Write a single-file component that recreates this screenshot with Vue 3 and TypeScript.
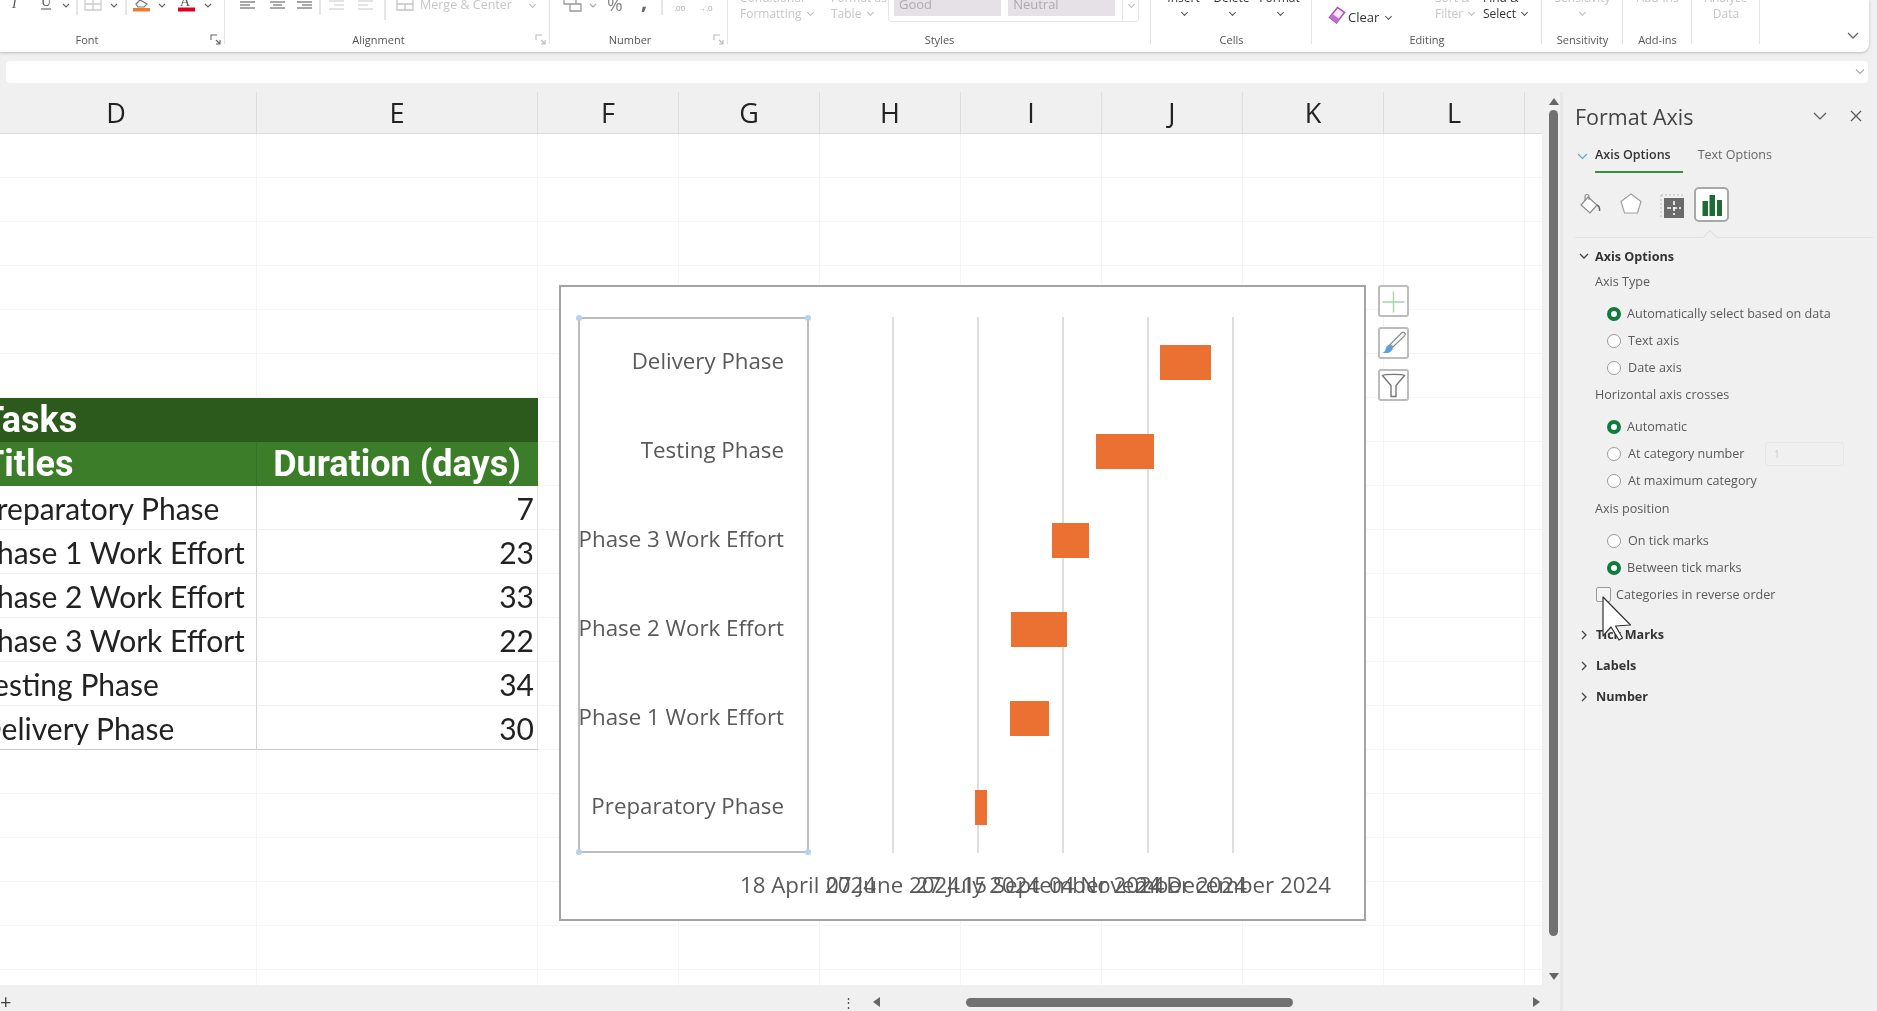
<script setup lang="ts">
import { computed } from "vue";

interface Task {
  title: string;
  offset: number;
  days: number;
}

// offset is days after the first axis date
const tasks: Task[] = [
  { title: "Preparatory Phase", offset: 98.5, days: 7 },
  { title: "Phase 1 Work Effort", offset: 119, days: 23 },
  { title: "Phase 2 Work Effort", offset: 119.5, days: 33 },
  { title: "Phase 3 Work Effort", offset: 143.5, days: 22 },
  { title: "Testing Phase", offset: 169.5, days: 34 },
  { title: "Delivery Phase", offset: 207, days: 30 },
];

const columns = ["D", "E", "F", "G", "H", "I", "J", "K", "L", ""];
const axisDates = [
  "18 April 2024",
  "07 June 2024",
  "27 July 2024",
  "15 September 2024",
  "04 November 2024",
  "24 December 2024",
];

const PX_PER_DAY = 1.7;
const AXIS_LEFT = 247; // first tick inside the chart
const ROW_STEP = 89;

const chartRows = computed(() => [...tasks].reverse());

function barStyle(task: Task, index: number) {
  return {
    left: `${AXIS_LEFT + task.offset * PX_PER_DAY}px`,
    width: `${task.days * PX_PER_DAY}px`,
    top: `${58 + index * ROW_STEP}px`,
  };
}

function labelStyle(index: number) {
  return { top: `${54 + index * ROW_STEP}px` };
}

function tickStyle(index: number) {
  return { left: `${AXIS_LEFT + index * 85}px` };
}

interface Cell {
  text: string;
  kind: string;
}

const GRID_ROWS = 20;
const TABLE_TOP = 6;

const cells = computed(() => {
  const out: Cell[] = [];
  for (let r = 0; r < GRID_ROWS; r++) {
    for (let c = 0; c < columns.length; c++) {
      let text = "";
      let kind = "";
      const t = r - TABLE_TOP;
      if (c < 2 && t >= 0 && t < 8) {
        if (t === 0) {
          kind = "cell--band";
          text = c === 0 ? "Tasks" : "";
        } else if (t === 1) {
          kind = c === 0 ? "cell--head" : "cell--head cell--center";
          text = c === 0 ? "Titles" : "Duration (days)";
        } else {
          const task = tasks[t - 2];
          kind = c === 0 ? "cell--body cell--name" : "cell--body cell--num";
          text = c === 0 ? task.title : String(task.days);
          if (t === 7) kind += " cell--last";
        }
      }
      out.push({ text, kind });
    }
  }
  return out;
});

const axisTypeOptions = [
  { label: "Automatically select based on data", on: true },
  { label: "Text axis", on: false },
  { label: "Date axis", on: false },
];
const crossesOptions = [
  { label: "Automatic", on: true, input: false },
  { label: "At category number", on: false, input: true },
  { label: "At maximum category", on: false, input: false },
];
const positionOptions = [
  { label: "On tick marks", on: false },
  { label: "Between tick marks", on: true },
];
const collapsedSections = ["Tick Marks", "Labels", "Number"];
</script>

<template>
  <div class="app">
    <!-- ribbon, the top is cut off by the window -->
    <header class="ribbon">
      <section class="group group--font">
        <div class="tools">
          <svg width="258" height="32" viewBox="-33 0 258 32">
            <text x="12" y="8" class="ico-text" font-style="italic" font-size="14">I</text>
            <text x="41" y="6" class="ico-text" font-size="14">U</text>
            <path d="M41 9h10" stroke="#888" stroke-width="1.5" />
            <path d="M63 4l3 3 3-3M111 4l3 3 3-3" fill="none" stroke="#666" stroke-width="1.2" />
            <path d="M77 0v15M126 0v15" stroke="#ddd" stroke-width="1.5" />
            <path d="M85 -3h16v13h-16zM85 4h16M93 -3v13" fill="none" stroke="#ccc" stroke-width="1.3" />
            <path d="M136 4l4-4 7 4-3 3h-6z" fill="none" stroke="#777" stroke-width="1.2" />
            <rect x="133" y="8" width="17" height="3.5" fill="#ed7d31" />
            <path d="M159 4l3 3 3-3M205 4l3 3 3-3" fill="none" stroke="#666" stroke-width="1.2" />
            <text x="180" y="6" class="ico-text" font-size="14">A</text>
            <rect x="178" y="7.5" width="17" height="4" fill="#e0001b" />
          </svg>
        </div>
        <div class="group-foot">
          <span class="group-name">Font</span>
          <svg class="launcher" width="18" height="14" viewBox="0 0 18 14">
            <path d="M4 8V3h6M9 8l4 4M13 8v4H9" fill="none" stroke="#666" stroke-width="1.1" />
          </svg>
        </div>
      </section>

      <section class="group group--align">
        <div class="tools">
          <svg width="190" height="32" viewBox="225 0 190 32">
            <path d="M240 2h15M240 5h10M240 8h15M270 2h15M273 5h9M270 8h15M297 2h15M302 5h10M297 8h15" stroke="#8c8c8c" stroke-width="1.4" />
            <path d="M320 0v15M385 0v20" stroke="#ddd" stroke-width="1.5" />
            <path d="M329 1h15M334 5h10M329 9h15M358 1h15M358 5h10M358 9h15" stroke="#c8c8c8" stroke-width="1.2" />
            <path d="M397 -1h16v11h-16zM397 4h16M405 4v6" fill="none" stroke="#c4c4c4" stroke-width="1.3" />
          </svg>
          <span class="tool-text tool-text--off merge">Merge &amp; Center</span>
          <span class="chev chev--off merge-chev"></span>
        </div>
        <div class="group-foot">
          <span class="group-name">Alignment</span>
          <svg class="launcher launcher--off" width="18" height="14" viewBox="0 0 18 14">
            <path d="M4 8V3h6M9 8l4 4M13 8v4H9" fill="none" stroke="#bbb" stroke-width="1.1" />
          </svg>
        </div>
      </section>

      <section class="group group--number">
        <div class="tools">
          <svg width="178" height="32" viewBox="550 0 178 32">
            <path d="M564 -2h12v6h-12zM570 4h11v7h-11z" fill="none" stroke="#999" stroke-width="1.3" />
            <path d="M590 4l3 3 3-3" fill="none" stroke="#aaa" stroke-width="1.2" />
            <text x="607" y="11" fill="#888" font-family="Open Sans, sans-serif" font-size="19">%</text>
            <text x="641" y="9" fill="#666" font-family="Open Sans, sans-serif" font-weight="700" font-size="22">,</text>
            <path d="M662 0v15" stroke="#ddd" stroke-width="1.5" />
            <text x="674" y="11" fill="#aaa" font-family="Open Sans, sans-serif" font-size="8">.00</text>
            <text x="698" y="11" fill="#aaa" font-family="Open Sans, sans-serif" font-size="8">→.0</text>
          </svg>
        </div>
        <div class="group-foot">
          <span class="group-name">Number</span>
          <svg class="launcher launcher--off" width="18" height="14" viewBox="0 0 18 14">
            <path d="M4 8V3h6M9 8l4 4M13 8v4H9" fill="none" stroke="#bbb" stroke-width="1.1" />
          </svg>
        </div>
      </section>

      <section class="group group--styles">
        <div class="tools">
          <div class="stack stack--cond tool-text--off">
            <span>Conditional</span>
            <span>Formatting <i class="chev chev--off"></i></span>
          </div>
          <div class="stack stack--table tool-text--off">
            <span>Format as</span>
            <span>Table <i class="chev chev--off"></i></span>
          </div>
          <div class="gallery">
            <span class="style-cell">Good</span>
            <span class="style-cell">Neutral</span>
            <span class="gallery-more"><i class="chev chev--off"></i></span>
          </div>
        </div>
        <div class="group-foot"><span class="group-name">Styles</span></div>
      </section>

      <section class="group group--cells">
        <div class="tools tools--center">
          <div class="stack stack--cell"><span>Insert</span><span><i class="chev"></i></span></div>
          <div class="stack stack--cell"><span>Delete</span><span><i class="chev"></i></span></div>
          <div class="stack stack--cell"><span>Format</span><span><i class="chev"></i></span></div>
        </div>
        <div class="group-foot"><span class="group-name">Cells</span></div>
      </section>

      <section class="group group--edit">
        <div class="tools">
          <svg class="eraser" width="18" height="20" viewBox="0 0 18 20">
            <path d="M1.5 11.5L9.5 1.5l7 5-8 10.5z" fill="#f6e8f8" stroke="#a64fb8" stroke-width="1.5" />
            <path d="M1.5 11.5l4 3 3 2.5 3-4-7-5z" fill="#c070d0" />
          </svg>
          <span class="tool-text clear">Clear <i class="chev"></i></span>
          <div class="stack stack--sort tool-text--off">
            <span>Sort &amp;</span>
            <span>Filter <i class="chev chev--off"></i></span>
          </div>
          <div class="stack stack--find">
            <span>Find &amp;</span>
            <span>Select <i class="chev"></i></span>
          </div>
        </div>
        <div class="group-foot"><span class="group-name">Editing</span></div>
      </section>

      <section class="group group--sens">
        <div class="tools tools--center">
          <div class="stack stack--mid tool-text--off"><span>Sensitivity</span><span><i class="chev chev--off"></i></span></div>
        </div>
        <div class="group-foot"><span class="group-name">Sensitivity</span></div>
      </section>

      <section class="group group--addin">
        <div class="tools tools--center">
          <div class="stack stack--mid tool-text--off"><span>Add-ins</span></div>
        </div>
        <div class="group-foot"><span class="group-name">Add-ins</span></div>
      </section>

      <section class="group group--data">
        <div class="tools tools--center">
          <div class="stack stack--mid tool-text--off"><span>Analyze</span><span>Data</span></div>
        </div>
        <div class="group-foot"></div>
      </section>

      <div class="ribbon-end">
        <svg width="14" height="10" viewBox="0 0 14 10">
          <path d="M2 2l5 5 5-5" fill="none" stroke="#666" stroke-width="1.3" />
        </svg>
      </div>
    </header>

    <div class="formula-bar">
      <svg width="12" height="8" viewBox="0 0 12 8">
        <path d="M2 1.5l4 4 4-4" fill="none" stroke="#aaa" stroke-width="1.2" />
      </svg>
    </div>

    <main class="main">
      <div class="sheet">
        <div class="col-heads">
          <div v-for="col in columns" :key="col" class="col-head">{{ col }}</div>
        </div>

        <div class="sheet-body">
          <div class="grid">
            <div v-for="(cell, i) in cells" :key="i" class="cell" :class="cell.kind">{{ cell.text }}</div>
          </div>

          <!-- chart floats over the grid -->
          <div class="chart">
            <div class="plot-box">
              <i class="handle handle--tl"></i>
              <i class="handle handle--tr"></i>
              <i class="handle handle--bl"></i>
              <i class="handle handle--br"></i>
            </div>
            <i v-for="n in 5" :key="n" class="tick" :style="tickStyle(n)"></i>
            <span v-for="(task, i) in chartRows" :key="task.title" class="cat-label" :style="labelStyle(i)">{{ task.title }}</span>
            <i v-for="(task, i) in chartRows" :key="'bar' + task.title" class="bar" :style="barStyle(task, i)"></i>
            <span v-for="(date, i) in axisDates" :key="date" class="date-label" :style="tickStyle(i)">{{ date }}</span>
          </div>

          <div class="chart-tools">
            <button type="button" class="chart-btn">
              <svg width="27" height="27" viewBox="0 0 27 27">
                <path d="M13.5 3.5v21M2.5 14h22" stroke="#a9d3ad" stroke-width="1.4" />
              </svg>
            </button>
            <button type="button" class="chart-btn">
              <svg width="27" height="27" viewBox="0 0 27 27">
                <path d="M24.5 2.5c1 1 .8 2.3 0 3.3L13 17l-3-2.5L21.5 3c1-.9 2-1.2 3-.5z" fill="#f4f4f4" stroke="#8a8a8a" stroke-width="1.1" />
                <path d="M9.5 14.5l3.5 3c-.5 3-3 5.5-6 5.5H2c2-.7 3-1.5 3.5-3.5.5-2.5 2-4.5 4-5z" fill="#5b9fe0" />
              </svg>
            </button>
            <button type="button" class="chart-btn">
              <svg width="27" height="27" viewBox="0 0 27 27">
                <path d="M2.5 3.5c2-1.5 20-1.5 22 0l-8.5 10v11h-5v-11z" fill="#fff" stroke="#777" stroke-width="1.4" />
              </svg>
            </button>
          </div>
        </div>

        <div class="hbar">
          <span class="add-sheet">+</span>
          <span class="hbar-dots">⋮</span>
          <i class="tri tri--left"></i>
          <div class="hthumb"></div>
          <i class="tri tri--right"></i>
        </div>
      </div>

      <div class="vbar">
        <i class="tri tri--up"></i>
        <div class="vthumb"></div>
        <i class="tri tri--down"></i>
      </div>

      <aside class="pane">
        <div class="pane-head">
          <h2 class="pane-title">Format Axis</h2>
          <svg width="14" height="9" viewBox="0 0 14 9">
            <path d="M1 1l6 6 6-6" fill="none" stroke="#555" stroke-width="1.2" />
          </svg>
          <svg class="pane-close" width="12" height="12" viewBox="0 0 12 12">
            <path d="M1 1l10 10M11 1L1 11" stroke="#555" stroke-width="1.2" />
          </svg>
        </div>

        <div class="tabs">
          <svg class="tabs-chev" width="11" height="7" viewBox="0 0 11 7">
            <path d="M1 1l4.5 4.5L10 1" fill="none" stroke="#5aa7d8" stroke-width="1.2" />
          </svg>
          <span class="tab tab--on">Axis Options</span>
          <span class="tab">Text Options</span>
        </div>

        <div class="pane-icons">
          <svg class="pi pi--bucket" width="22" height="24" viewBox="0 0 22 24">
            <path d="M9 4l9 8-7 8-9-8z" fill="#fff" stroke="#8a8a8a" stroke-width="1.2" />
            <path d="M6 8V3.5a2 2 0 0 1 4 0V7" fill="none" stroke="#8a8a8a" stroke-width="1.1" />
            <path d="M18 12c2 1 3 3 2.5 6" fill="none" stroke="#666" stroke-width="1.4" />
          </svg>
          <svg class="pi pi--pent" width="24" height="24" viewBox="0 0 24 24">
            <path d="M12 2l10 7.5-3.5 11.5h-13L2 9.5z" fill="#fff" stroke="#a0a0a0" stroke-width="1.2" />
          </svg>
          <svg class="pi pi--size" width="24" height="24" viewBox="0 0 24 24">
            <rect x="4" y="4" width="20" height="20" fill="#6b6b6b" />
            <path d="M14 7v14M7 14h14" stroke="#fff" stroke-width="1.6" stroke-dasharray="4 2" />
            <path d="M1 1v23M1 1h23" stroke="#bbb" stroke-width="1" stroke-dasharray="2 2" />
          </svg>
          <span class="pi-active">
            <svg width="22" height="24" viewBox="0 0 22 24">
              <path d="M1.5 8h5.5v15h-5.5zM8.5 2h5.5v21h-5.5zM16 7h5v16h-5z" fill="#1f6b34" />
            </svg>
          </span>
          <i class="pane-notch"></i>
        </div>

        <div class="sect-head">
          <svg width="10" height="7" viewBox="0 0 10 7"><path d="M1 1l4 4 4-4" fill="none" stroke="#444" stroke-width="1.3" /></svg>
          <span>Axis Options</span>
        </div>

        <div class="pane-label">Axis Type</div>
        <label v-for="o in axisTypeOptions" :key="o.label" class="radio-row">
          <i class="radio" :class="{ 'radio--on': o.on }"></i>{{ o.label }}
        </label>

        <div class="pane-label">Horizontal axis crosses</div>
        <label v-for="o in crossesOptions" :key="o.label" class="radio-row">
          <i class="radio" :class="{ 'radio--on': o.on }"></i>{{ o.label }}
          <span v-if="o.input" class="num-input">1</span>
        </label>

        <div class="pane-label pane-label--pos">Axis position</div>
        <label v-for="o in positionOptions" :key="o.label" class="radio-row">
          <i class="radio" :class="{ 'radio--on': o.on }"></i>{{ o.label }}
        </label>

        <label class="check-row"><i class="check"></i>Categories in reverse order</label>

        <div class="sect-list">
          <div v-for="name in collapsedSections" :key="name" class="sect-head sect-head--closed">
            <svg width="7" height="10" viewBox="0 0 7 10"><path d="M1 1l4 4-4 4" fill="none" stroke="#444" stroke-width="1.3" /></svg>
            <span>{{ name }}</span>
          </div>
        </div>

        <svg class="cursor" width="32" height="46" viewBox="0 0 32 46">
          <path d="M1 1v39l8-9 8 13 3.5-2-7-12 15-1z" fill="#fff" stroke="#333" stroke-width="1.2" stroke-linejoin="round" />
        </svg>
      </aside>
    </main>
  </div>
</template>

<style>
html,
body {
  margin: 0;
  background: #f0f0f0;
}
</style>

<style scoped>
.app {
  width: 1877px;
  height: 1011px;
  overflow: hidden;
  display: flex;
  flex-direction: column;
  background: #f0f0f0;
  font-family: "Open Sans", "Noto Sans", sans-serif;
  color: #333;
  filter: blur(0.45px);
}

/* ribbon */
.ribbon {
  width: 1869px;
  height: 52px;
  flex: none;
  display: flex;
  background: #fff;
  border-radius: 0 0 8px 0;
  box-shadow: 0 1px 3px rgba(0, 0, 0, 0.22);
  overflow: hidden;
}
.group {
  flex: none;
  display: flex;
  flex-direction: column;
  position: relative;
}
.group::after {
  content: "";
  position: absolute;
  right: 0;
  top: 0;
  height: 44px;
  width: 1px;
  background: #e2e2e2;
}
.group--font { width: 225px; }
.group--font .tools { margin-left: -33px; }
.group--font .group-foot { margin-left: -33px; }
.group--align { width: 325px; }
.group--number { width: 178px; }
.group--styles { width: 423px; }
.group--cells { width: 161px; }
.group--edit { width: 230px; }
.group--sens { width: 81px; }
.group--addin { width: 69px; }
.group--data { width: 68px; }
.tools {
  height: 31px;
  display: flex;
  align-items: flex-start;
}
.tools--center {
  justify-content: center;
}
.group-foot {
  height: 16px;
  display: flex;
  align-items: center;
}
.group-name {
  flex: 1;
  text-align: center;
  font-size: 11px;
  color: #555;
}
.launcher {
  flex: none;
}
.ico-text {
  font-family: "Liberation Serif", serif;
  fill: #555;
}
.tool-text {
  font-size: 12px;
  line-height: 16px;
  white-space: nowrap;
}
.tool-text--off {
  color: #c6c6c6;
}
.merge {
  margin: -3px 0 0 5px;
  font-size: 12.5px;
}
.chev {
  display: inline-block;
  width: 4px;
  height: 4px;
  border-right: 1.2px solid #555;
  border-bottom: 1.2px solid #555;
  transform: rotate(45deg);
  margin: 0 2px 3px 3px;
}
.chev--off {
  border-color: #bbb;
}
.chev.merge-chev {
  margin: 2px 0 0 18px;
}
.stack {
  display: flex;
  flex-direction: column;
  margin-top: -10px;
  font-size: 12px;
  line-height: 16px;
  white-space: nowrap;
}
.stack--cond {
  margin-left: 12px;
  width: 91px;
}
.stack--table {
  width: 57px;
}
.stack--cell {
  width: 48px;
  align-items: center;
}
.stack--mid {
  align-items: center;
}
.stack--sort {
  margin-left: 33px;
  width: 48px;
}
.gallery {
  width: 251px;
  height: 22px;
  box-sizing: border-box;
  display: flex;
  gap: 7px;
  padding-left: 5px;
  border: 1.5px solid #e6e6e6;
  border-top: 0;
  border-radius: 0 0 4px 4px;
}
.style-cell {
  width: 109px;
  height: 16px;
  background: #e6e1e6;
  color: #b3a8af;
  font-size: 13px;
  line-height: 9px;
  padding-left: 5px;
  box-sizing: border-box;
}
.gallery-more {
  margin-left: auto;
  width: 15px;
  border-left: 1.5px solid #e6e6e6;
  font-size: 9px;
  text-align: center;
}
.eraser {
  margin: 6px 0 0 16px;
}
.clear {
  margin: 9px 0 0 2px;
  font-size: 13px;
  width: 54px;
}
.ribbon-end {
  flex: 1;
  display: flex;
  justify-content: flex-end;
  align-items: flex-end;
  padding: 0 9px 11px 0;
}

/* formula bar */
.formula-bar {
  height: 22px;
  width: 1862px;
  margin: 9px 0 9px 6px;
  background: #fff;
  border-radius: 4px;
  flex: none;
  display: flex;
  align-items: center;
  justify-content: flex-end;
  padding-right: 2px;
  box-sizing: border-box;
}

/* sheet */
.main {
  flex: 1;
  min-height: 0;
  display: flex;
}
.sheet {
  width: 1542px;
  flex: none;
  display: flex;
  flex-direction: column;
  overflow: hidden;
}
.col-heads {
  height: 42px;
  flex: none;
  display: flex;
  margin-left: -24px;
  border-bottom: 1.5px solid #dcdcdc;
  box-sizing: border-box;
}
.col-head {
  width: 141px;
  flex: none;
  box-sizing: border-box;
  border-right: 1px solid #dedede;
  text-align: center;
  font-size: 27px;
  line-height: 42px;
  color: #222;
}
.col-head:nth-child(1),
.col-head:nth-child(2) {
  width: 281px;
}
.sheet-body {
  flex: 1;
  min-height: 0;
  background: #fff;
  position: relative;
  overflow: hidden;
}
.grid {
  display: grid;
  margin-left: -24px;
  grid-template-columns: 281px 281px repeat(8, 141px);
  grid-auto-rows: 44px;
}
.cell {
  box-sizing: border-box;
  border-right: 1.5px solid #f4f4f4;
  border-bottom: 1.5px solid #f4f4f4;
  font-family: Lato, "Open Sans", sans-serif;
  font-size: 30px;
  line-height: 44px;
  padding: 0 3px;
  white-space: nowrap;
  color: #222;
}
.cell--band,
.cell--head {
  color: #fff;
  font-family: Roboto, sans-serif;
  font-weight: 700;
  font-size: 36px;
  line-height: 44px;
  text-indent: 3px;
}
.cell--band {
  background: #2b5a1c;
  border-color: #2b5a1c;
}
.cell--head {
  background: #3b7d28;
  border-color: #3b7d28;
}
.cell--head:not(.cell--center) {
  border-right-color: #35702a;
}
.cell--center {
  text-align: center;
  text-indent: 0;
}
.cell--body {
  border-bottom-color: #f0f0f0;
}
.cell--name {
  border-right-color: #d4d4d4;
}
.cell--num {
  text-align: right;
  border-right-color: #e4e4e4;
}
.cell--last {
  border-bottom-color: #c8c8c8;
}

/* chart */
.chart {
  position: absolute;
  left: 559px;
  top: 151px;
  width: 807px;
  height: 636px;
  box-sizing: border-box;
  background: #fff;
  border: 2px solid #a3a3a3;
}
.plot-box {
  position: absolute;
  left: 17px;
  top: 30px;
  width: 231px;
  height: 536px;
  box-sizing: border-box;
  border: 2px solid #bdbdbd;
}
.handle {
  position: absolute;
  width: 6px;
  height: 6px;
  border-radius: 50%;
  background: #b5d3ee;
}
.handle--tl { left: -4px; top: -4px; }
.handle--tr { right: -4px; top: -4px; }
.handle--bl { left: -4px; bottom: -4px; }
.handle--br { right: -4px; bottom: -4px; }
.tick {
  position: absolute;
  top: 30px;
  height: 536px;
  width: 2px;
  margin-left: -1px;
  background: #dedede;
}
.cat-label {
  position: absolute;
  right: 580px;
  line-height: 40px;
  font-size: 22.3px;
  color: #595959;
  white-space: nowrap;
}
.bar {
  position: absolute;
  height: 35px;
  background: #ea7132;
}
.date-label {
  position: absolute;
  top: 581px;
  transform: translateX(-50%);
  line-height: 34px;
  font-size: 22.3px;
  color: #595959;
  white-space: nowrap;
}
.chart-tools {
  position: absolute;
  left: 1378px;
  top: 151px;
  display: flex;
  flex-direction: column;
  gap: 10px;
}
.chart-btn {
  width: 31px;
  height: 32px;
  padding: 0;
  box-sizing: border-box;
  background: #fff;
  border: 2px solid #bcbcbc;
  border-radius: 3px;
  display: flex;
  align-items: center;
  justify-content: center;
}

/* scroll bars */
.hbar {
  height: 26px;
  flex: none;
  position: relative;
  display: flex;
  align-items: center;
  padding: 8px 0 0 842px;
  box-sizing: border-box;
}
.add-sheet {
  position: absolute;
  left: 0;
  top: 5px;
  font-size: 20px;
  line-height: 24px;
  color: #444;
}
.hbar-dots {
  width: 6px;
  font-size: 13px;
  line-height: 18px;
  color: #555;
  text-align: center;
}
.hthumb {
  width: 327px;
  height: 9px;
  border-radius: 5px;
  background: #717171;
  margin: 0 240px 0 86px;
}
.tri {
  width: 0;
  height: 0;
  flex: none;
  display: block;
  border-style: solid;
  border-color: transparent;
}
.tri--left {
  margin-left: 25px;
  border-width: 5px 7px 5px 0;
  border-right-color: #666;
}
.tri--right {
  border-width: 5px 0 5px 7px;
  border-left-color: #666;
}
.tri--up {
  border-width: 0 5px 7px;
  border-bottom-color: #666;
}
.tri--down {
  border-width: 7px 5px 0;
  border-top-color: #666;
  margin-top: 37px;
}
.vbar {
  width: 21px;
  flex: none;
  display: flex;
  flex-direction: column;
  align-items: center;
  padding: 6px 0 0 5px;
  box-sizing: border-box;
  border-right: 3px solid #e8e8e8;
}
.vthumb {
  width: 9px;
  height: 826px;
  margin-top: 5px;
  border-radius: 5px;
  background: #717171;
}

/* format pane */
.pane {
  flex: 1;
  position: relative;
  padding-left: 12px;
  color: #5a5a5a;
  font-size: 12.6px;
}
.pane-head {
  height: 48px;
  display: flex;
  align-items: center;
  padding-right: 15px;
}
.pane-title {
  flex: 1;
  margin: 0;
  font-size: 21.5px;
  font-weight: 400;
  color: #444;
}
.pane-close {
  margin-left: 23px;
}
.tabs {
  height: 33px;
  margin-top: 2px;
  margin-bottom: -2px;
  display: flex;
  align-items: flex-start;
  line-height: 26px;
  font-size: 12.5px;
}
.tabs-chev {
  margin: 11px 7px 0 2px;
}
.tab {
  padding-right: 16px;
  height: 29px;
  color: #666;
}
.tab--on {
  color: #333;
  font-weight: 600;
  border-bottom: 2px solid #3d8b45;
  padding-right: 12px;
  margin-right: 15px;
}
.pane-icons {
  height: 65px;
  width: 298px;
  box-sizing: border-box;
  border-bottom: 1.5px solid #e0e0e0;
  position: relative;
  display: flex;
  align-items: flex-start;
  padding-top: 14px;
}
.pi {
  flex: none;
  margin-top: 6px;
}
.pi--bucket { margin-left: 4px; }
.pi--pent { margin-left: 18px; margin-top: 5px; }
.pi--size { margin-left: 17px; margin-top: 7px; }
.pi-active {
  margin-left: 10px;
  width: 35px;
  height: 35px;
  box-sizing: border-box;
  background: #fff;
  border: 2px solid #a8a8a8;
  border-radius: 5px;
  display: flex;
  align-items: center;
  justify-content: center;
}
.pane-notch {
  position: absolute;
  left: 130px;
  bottom: -5px;
  width: 9px;
  height: 9px;
  background: #f0f0f0;
  border-left: 1.5px solid #e0e0e0;
  border-top: 1.5px solid #e0e0e0;
  transform: rotate(45deg);
}
.sect-head {
  height: 36px;
  display: flex;
  align-items: center;
  gap: 6px;
  padding-left: 4px;
  font-weight: 700;
  color: #333;
}
.sect-head--closed {
  height: 31px;
  gap: 8px;
  padding-left: 6px;
}
.sect-list {
  margin-top: 12px;
}
.pane-label {
  height: 16px;
  line-height: 16px;
  margin: 6px 0 10px 20px;
}
.sect-head + .pane-label {
  margin-top: 0;
}
.pane-label--pos {
  margin: 7px 0 10px 20px;
}
.radio-row {
  height: 27px;
  display: flex;
  align-items: center;
  padding-left: 32px;
  white-space: nowrap;
}
.radio {
  width: 12px;
  height: 12px;
  margin-right: 7px;
  border: 1.5px solid #9a9a9a;
  border-radius: 50%;
  background: #fff;
  box-sizing: content-box;
}
.radio--on {
  width: 6px;
  height: 6px;
  border: 4px solid #0f7b3f;
  margin-right: 6px;
}
.num-input {
  position: absolute;
  left: 202px;
  width: 79px;
  height: 24px;
  box-sizing: border-box;
  border: 1px solid #e6e6e6;
  border-radius: 3px;
  font-size: 10px;
  line-height: 22px;
  padding-left: 8px;
  color: #ccc;
}
.check-row {
  height: 26px;
  display: flex;
  align-items: center;
  padding-left: 21px;
}
.check {
  width: 13px;
  height: 13px;
  margin-right: 5px;
  border: 1.5px solid #9a9a9a;
  border-radius: 2px;
  background: #f4f4f4;
}
.cursor {
  position: absolute;
  left: 39px;
  top: 504px;
}
</style>
